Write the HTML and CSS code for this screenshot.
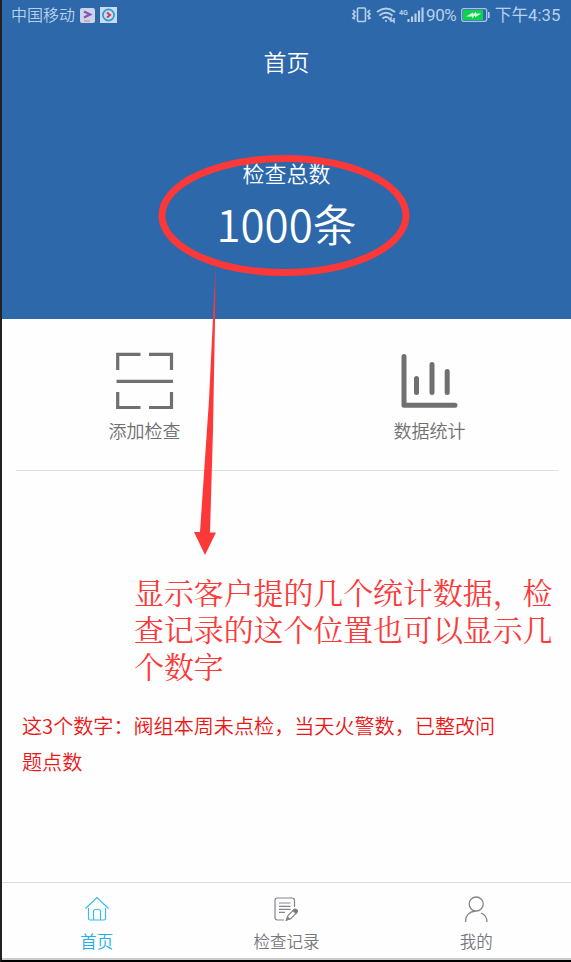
FILE: index.html
```html
<!DOCTYPE html>
<html lang="zh-CN">
<head>
<meta charset="utf-8">
<title>首页</title>
<link rel="stylesheet" href="styles.css">
</head>
<body>
<div class="screen">
  <header class="hero">
    <div class="status">
      <span class="carrier">中国移动</span>
      <svg class="app-icon" width="15" height="15" viewBox="0 0 15 15"><rect width="15" height="15" rx="2" fill="#cdd5ec"/><path d="M4 3.500 10 6.500 4 9.500" fill="none" stroke="#8b55b5" stroke-width="2.400"/><path d="M4 13h6" stroke="#e792ac" stroke-width="1.500"/></svg>
      <svg class="app-icon second" width="17" height="16" viewBox="0 0 17 16"><rect width="17" height="16" fill="#cbdcf0"/><circle cx="8.500" cy="8" r="5.600" fill="none" stroke="#2c9bdc" stroke-width="1.700"/><path d="M7 5.400 10 8 7 10.600" fill="none" stroke="#d33b4d" stroke-width="2"/></svg>
      <svg class="signals" width="74" height="18" viewBox="0 0 74 18" fill="none" stroke="#b9d0ec">
        <rect x="6.500" y="2" width="8" height="13.500" rx="1" stroke-width="1.600"/>
        <path d="M2 4l2 2-2 2 2 2-2 2 2 1M19 4l-2 2 2 2-2 2 2 2-2 1" stroke-width="1.700"/>
        <path d="M26 6Q35-1 44 6M28.500 9.500Q35 4 41.500 9.500M31.500 12.500Q35 9.500 38.500 12.500" stroke-width="1.900"/>
        <path d="M34 15h2M38 14l2-2v4M43 12v4l-2-2" stroke-width="1.500"/>
        <path d="M57.500 13v3M61 10.500v5.500M64.500 7.500v8.500M68 4.500v11.500M71.500 1.500v14.500" stroke-width="2.100"/>
        <text class="network" x="48" y="8.500" textLength="9" lengthAdjust="spacingAndGlyphs">4G</text>
      </svg>
      <span class="percent">90%</span>
      <svg class="battery" width="29" height="14" viewBox="0 0 29 14"><rect x=".7" y=".7" width="25" height="12.600" rx="2" fill="none" stroke="#a9c1e2" stroke-width="1.300"/><rect x="2" y="2" width="20" height="10" fill="#0bd34c"/><path d="M5 8.500 12 4.500v2l3-3v2h5l-6 4V7.500l-3 3v-2Z" fill="#d8ffe3"/><path d="M27.800 4v6" stroke="#b9d0ec" stroke-width="1.600"/></svg>
      <span class="time">下午4:35</span>
    </div>
    <h1>首页</h1>
    <div class="total-label">检查总数</div>
    <div class="total">1000条</div>
  </header>
  <main>
    <div class="actions">
      <div class="action">
        <svg width="58" height="58" viewBox="0 0 58 58" fill="none" stroke="#707070" stroke-width="3.200"><path d="M1.700 18V2.300H24.500M33 2.300H55.500V18M1.700 40V55.500H24.500M33 55.500H55.500V40M.5 29.300H57"/></svg>
        <span>添加检查</span>
      </div>
      <div class="action">
        <svg width="58" height="58" viewBox="0 0 58 58" fill="none" stroke="#707070" stroke-width="5" stroke-linecap="round" stroke-linejoin="round"><path d="M3 4.500V53.300H54M15.500 26.500V40.500M31 12.500V40.500M46.200 19.500V40.500"/></svg>
        <span>数据统计</span>
      </div>
    </div>
    <p class="note-large">显示客户提的几个统计数据，检<br>查记录的这个位置也可以显示几<br>个数字</p>
    <p class="note-small">这3个数字：阀组本周未点检，当天火警数，已整改问<br>题点数</p>
  </main>
  <nav>
    <div class="tab active">
      <svg width="28" height="28" viewBox="0 0 28 28" fill="none" stroke="#3dbaf2" stroke-width="1.200"><path d="M2.500 13.500 14 2.500 25.500 13.500M5.500 13V23.500Q5.500 25 7 25H21Q22.500 25 22.500 23.500V13M10.500 25V16.500Q10.500 14.500 12.500 14.500H15.500Q17.500 14.500 17.500 16.500V25"/></svg>
      <span>首页</span>
    </div>
    <div class="tab">
      <svg width="28" height="28" viewBox="0 0 28 28" fill="none" stroke="#84858a" stroke-width="1.200"><path d="M12 25H5.500Q3 25 3 22.500V5.500Q3 3 5.500 3H20Q22.500 3 22.500 5.500V12M7 8H18.500M7 11.300H18.500M7 14.300H18.500M7 17.300H13"/><path d="M14.500 25 16 20.500 21.500 15 24.500 17.800 19 23.500Z"/><path d="M21 15.500 22.500 14.200Q24 13.800 25.500 15.500 26 17 24 18.500ZM14.500 25 15.500 22 17.500 24Z" fill="#737479"/></svg>
      <span>检查记录</span>
    </div>
    <div class="tab">
      <svg width="28" height="28" viewBox="0 0 28 28" fill="none" stroke="#84858a" stroke-width="1.300"><circle cx="14.200" cy="9" r="7"/><path d="M3.500 27C3.500 20 8 16.500 13.500 16M19 18Q25 20.500 25 27"/></svg>
      <span>我的</span>
    </div>
  </nav>
  <svg class="markup" width="571" height="962" viewBox="0 0 571 962"><ellipse cx="284" cy="215.500" rx="122" ry="57" fill="none" stroke="#fc3938" stroke-width="7"/><path d="M215.500 266 215 320 213 430 210 532.500H216L205 555 194 532H200L209 400Z" fill="#fc3938"/></svg>
</div>
</body>
</html>
```
FILE: styles.css
```css
* { box-sizing: border-box; }
body {
  margin: 0;
  font-family: "Noto Sans CJK SC", sans-serif;
  font-weight: 350;
}
.screen {
  position: relative;
  display: flex;
  flex-direction: column;
  width: 571px;
  height: 962px;
  overflow: hidden;
  border-left: 2px solid #222;
  border-bottom: 2px solid #000;
  background: #fefefe;
}
.hero {
  height: 319px;
  flex: none;
  background: #2c68aa;
  color: #fff;
  text-align: center;
}
.status {
  display: flex;
  align-items: center;
  height: 30px;
  padding: 0 10px 0 9px;
  color: #b9d0ec;
  font-size: 16px;
  line-height: 30px;
  white-space: nowrap;
}
.carrier { width: 69px; margin-top: -2px; text-align: left; }
.app-icon { flex: none; }
.second { margin-left: 5px; }
.signals { flex: none; margin-left: auto; }
.network { fill: #b9d0ec; stroke: none; font: bold 8px "Roboto", sans-serif; }
.percent { width: 36px; font: 17px/30px "Roboto", "Noto Sans CJK SC", sans-serif; letter-spacing: -.4px; text-align: left; text-indent: 1px; }
.battery { flex: none; }
.time { width: 67px; margin: 2px 0 0 4px; font-family: "Roboto", "Noto Sans CJK SC", sans-serif; font-size: 16.700px; font-weight: 400; }
h1 {
  margin: 13px 0 0;
  font-size: 23px;
  line-height: 36px;
  font-weight: 350;
}
.total-label { margin-top: 76px; font-size: 22px; line-height: 34px; }
.total { margin-top: 2px; font-size: 43.800px; line-height: 64px; }
main { flex: 1; }
.actions {
  display: grid;
  grid-template-columns: 1fr 1fr;
  height: 152px;
  margin: 0 13px 0 14px;
  border-bottom: 1px solid #dfdfdf;
}
.action {
  display: flex;
  flex-direction: column;
  align-items: center;
  padding-top: 33px;
  color: #707070;
  font-size: 18px;
  line-height: 28px;
}
.action:first-child { padding-right: 14px; }
.action:last-child { padding-left: 14px; }
.action span { margin-top: 6px; }
p { margin: 0; white-space: nowrap; }
.note-large {
  margin: 102px 0 0 132px;
  color: #fc3938;
  font-family: "Noto Serif CJK SC", "SimSun", "Noto Sans CJK SC", serif;
  font-size: 29.900px;
  line-height: 37px;
  font-weight: 400;
}
.note-small {
  margin: 24px 0 0 20px;
  color: #eb1717;
  font-size: 20.100px;
  line-height: 36px;
}
nav {
  display: grid;
  grid-template-columns: repeat(3, 1fr);
  height: 78px;
  flex: none;
  border-top: 1px solid #dcdcdc;
  border-bottom: 2px solid #ccc;
}
.tab {
  display: flex;
  flex-direction: column;
  align-items: center;
  padding-top: 12px;
  color: #77787d;
  font-size: 16.500px;
  line-height: 24px;
}
.tab span { margin-top: 6px; }
.active { color: #24aee9; }
.markup { position: absolute; left: -2px; top: 0; pointer-events: none; }
```
